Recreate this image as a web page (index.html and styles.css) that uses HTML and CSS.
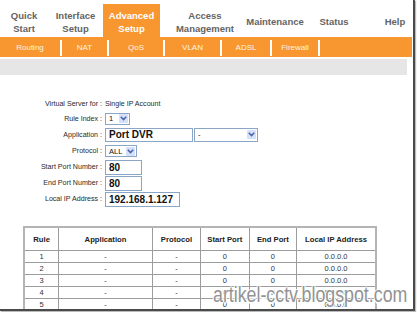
FILE: index.html
```html
<!DOCTYPE html>
<html lang="en">
<head>
    <meta charset="UTF-8">
    <meta name="viewport" content="width=device-width, initial-scale=1.0">
    <title>Advanced Setup - Virtual Server</title>
    <link rel="stylesheet" href="styles.css">
</head>
<body>

<div class="shot">
    <div class="page">

        <!-- main tabs -->
        <div class="topnav">
            <div class="tab t-quick">Quick<br>Start</div>
            <div class="tab t-iface">Interface<br>Setup</div>
            <div class="tab t-adv active">Advanced<br>Setup</div>
            <div class="tab t-access">Access<br>Management</div>
            <div class="tab t-maint">Maintenance</div>
            <div class="tab t-status">Status</div>
            <div class="tab t-help">Help</div>
        </div>

        <!-- sub tabs -->
        <div class="subnav">
            <span class="sub s-routing">Routing</span>
            <span class="sub s-nat">NAT</span>
            <span class="sub s-qos">QoS</span>
            <span class="sub s-vlan">VLAN</span>
            <span class="sub s-adsl">ADSL</span>
            <span class="sub s-fw">Firewall</span>
        </div>

        <div class="strip"></div>

        <!-- virtual server form -->
        <div class="form">
            <div class="lbl">Virtual Server for :</div>
            <div class="val">Single IP Account</div>

            <div class="lbl">Rule Index :</div>
            <div class="val">
                <div class="select sel-rule"><span class="opt">1</span><span class="arrow"><svg width="7" height="5" viewBox="0 0 7 5"><path d="M0.8 0.8 L3.5 3.6 L6.2 0.8" fill="none" stroke="#4a64a8" stroke-width="1.6"/></svg></span></div>
            </div>

            <div class="lbl">Application :</div>
            <div class="val">
                <div class="input in-app">Port DVR</div>
                <div class="select sel-app"><span class="opt">-</span><span class="arrow"><svg width="7" height="5" viewBox="0 0 7 5"><path d="M0.8 0.8 L3.5 3.6 L6.2 0.8" fill="none" stroke="#4a64a8" stroke-width="1.6"/></svg></span></div>
            </div>

            <div class="lbl">Protocol :</div>
            <div class="val">
                <div class="select sel-proto"><span class="opt">ALL</span><span class="arrow"><svg width="7" height="5" viewBox="0 0 7 5"><path d="M0.8 0.8 L3.5 3.6 L6.2 0.8" fill="none" stroke="#4a64a8" stroke-width="1.6"/></svg></span></div>
            </div>

            <div class="lbl">Start Port Number :</div>
            <div class="val"><div class="input in-port">80</div></div>

            <div class="lbl">End Port Number :</div>
            <div class="val"><div class="input in-port">80</div></div>

            <div class="lbl">Local IP Address :</div>
            <div class="val"><div class="input in-ip">192.168.1.127</div></div>
        </div>

        <!-- rules list -->
        <table class="rules">
            <thead>
                <tr>
                    <th class="c-rule">Rule</th>
                    <th class="c-app">Application</th>
                    <th class="c-proto">Protocol</th>
                    <th class="c-start">Start Port</th>
                    <th class="c-end">End Port</th>
                    <th class="c-ip">Local IP Address</th>
                </tr>
            </thead>
            <tbody id="rulesTable"></tbody>
        </table>

    </div>
    <div class="watermark">artikel-cctv.blogspot.com</div>
</div>

<script>
    // fill the rule rows
    const rows = [1, 2, 3, 4, 5];
    const table = document.getElementById("rulesTable");
    rows.forEach(n => {
        table.innerHTML += `
            <tr>
                <td>${n}</td>
                <td>-</td>
                <td>-</td>
                <td>0</td>
                <td>0</td>
                <td>0.0.0.0</td>
            </tr>`;
    });
</script>

</body>
</html>
```

FILE: styles.css
```css
body { margin: 0; background: #fff; font-family: "Liberation Sans", Arial, sans-serif; color: #222; }

.shot { position: relative; width: 416px; height: 312px; }
.page { width: 413px; height: 309px; overflow: hidden; border-right: 2px solid #4a4a4a; border-bottom: 2px solid #4a4a4a; box-shadow: 1px 1px 1px #bbb; }

/* main tabs */
.topnav { display: flex; height: 37px; }
.tab { display: flex; align-items: center; justify-content: center; text-align: center; box-sizing: border-box; height: 37px; padding-top: 6px; font-size: 9.5px; font-weight: bold; line-height: 13px; color: #646464; }
.tab.active { background: #f8962f; color: #fff; margin-top: 4px; height: 33px; padding-top: 2px; }
.t-quick { width: 48px; }
.t-iface { width: 55px; }
.t-adv { width: 57px; }
.t-access { width: 90px; }
.t-maint { width: 50px; }
.t-status { width: 68px; }
.t-help { width: 44px; padding-left: 10px; }

/* sub tabs */
.subnav { display: flex; width: 412px; height: 20px; box-sizing: border-box; padding-top: 3px; background: #f8962f; }
.sub { box-sizing: border-box; height: 16px; line-height: 16px; border-right: 2px solid #fff; text-align: center; font-size: 8px; color: #fff3e2; }
.s-routing { width: 62px; }
.s-nat { width: 47px; }
.s-qos { width: 56px; }
.s-vlan { width: 57px; }
.s-adsl { width: 50px; }
.s-fw { width: 48px; }

.strip { width: 407px; height: 16px; margin-top: 2px; background: #e6e6e6; }

/* form */
.form { display: grid; grid-template-columns: 102px 1fr; grid-template-rows: 14px 15px 17px 16px 16px 16px 16px; column-gap: 3px; margin-top: 22px; font-size: 7.1px; }
.lbl { display: flex; align-items: center; justify-content: flex-end; color: #2a2a2a; }
.val { display: flex; align-items: center; gap: 1px; color: #2a2a2a; }

.input { box-sizing: border-box; border: 1px solid #8aa6c6; height: 15px; line-height: 13px; padding-left: 3px; font-size: 10px; font-weight: bold; color: #111; }
.in-app { width: 88px; height: 14px; line-height: 12px; }
.in-port { width: 37px; }
.in-ip { width: 75px; }

.select { display: flex; align-items: center; justify-content: space-between; box-sizing: border-box; border: 1px solid #8aa6c6; height: 12px; padding: 0 1px 0 3px; font-size: 7.5px; color: #111; }
.sel-rule { width: 25px; }
.sel-app { width: 64px; height: 14px; }
.sel-proto { width: 32px; }
.arrow { display: flex; align-items: center; justify-content: center; width: 9px; height: 9px; background: #d5e1fa; border-radius: 1px; }

/* table */
.rules { margin: 19px 0 0 23px; width: 354px; border-collapse: collapse; border: 2px solid #b4b4b4; font-size: 7.5px; color: #333; }
.rules th, .rules td { border: 1px solid #9c9c9c; padding: 0; text-align: center; }
.rules th { height: 22px; font-size: 7.7px; font-weight: bold; color: #222; }
.rules td { height: 11px; line-height: 11px; }
.c-rule { width: 34px; }
.c-app { width: 95px; }
.c-proto { width: 48px; }
.c-start { width: 49px; }
.c-end { width: 48px; }
.c-ip { width: 80px; }

/* blog watermark over the picture */
.watermark { position: absolute; left: 213px; top: 282px; white-space: nowrap; font-size: 17.8px; color: #939393; transform: scaleY(1.28); transform-origin: left top; text-shadow: 1px 0 0 #fff, -1px 0 0 #fff, 0 1px 0 #fff, 0 -1px 0 #fff; }
```
